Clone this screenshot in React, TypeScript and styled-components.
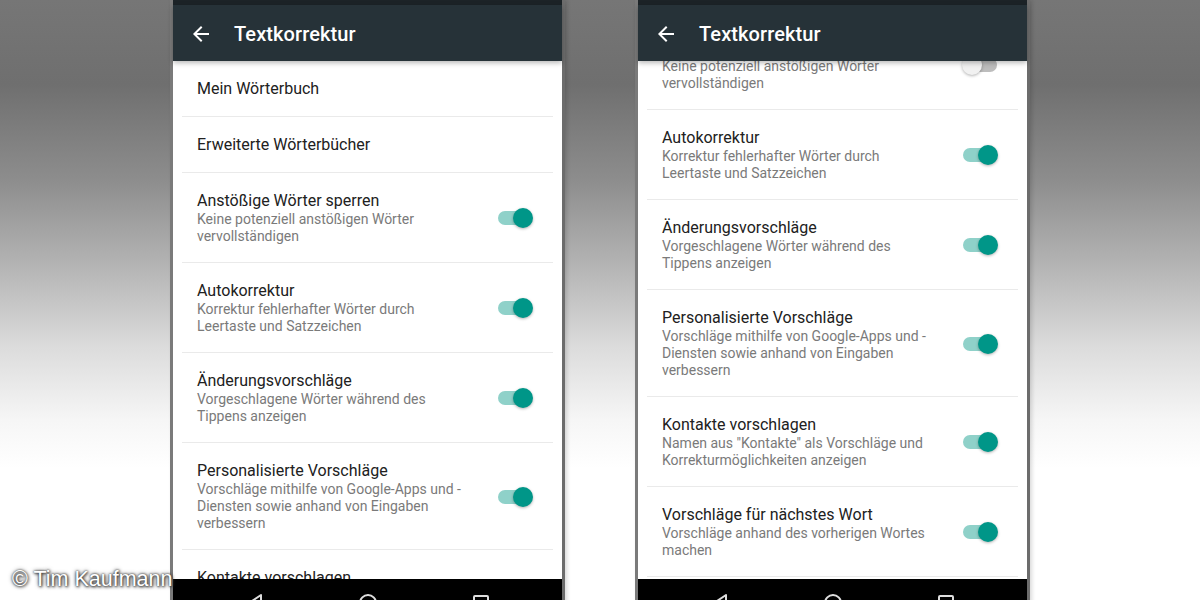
import React from "react";
import styled, { createGlobalStyle } from "styled-components";

type Row = {
  id: string;
  title: string;
  sub?: string[];
};

const rows: Row[] = [
  { id: "dict", title: "Mein Wörterbuch" },
  { id: "ext", title: "Erweiterte Wörterbücher" },
  {
    id: "block",
    title: "Anstößige Wörter sperren",
    sub: ["Keine potenziell anstößigen Wörter", "vervollständigen"],
  },
  {
    id: "auto",
    title: "Autokorrektur",
    sub: ["Korrektur fehlerhafter Wörter durch", "Leertaste und Satzzeichen"],
  },
  {
    id: "hints",
    title: "Änderungsvorschläge",
    sub: ["Vorgeschlagene Wörter während des", "Tippens anzeigen"],
  },
  {
    id: "personal",
    title: "Personalisierte Vorschläge",
    sub: [
      "Vorschläge mithilfe von Google-Apps und -",
      "Diensten sowie anhand von Eingaben",
      "verbessern",
    ],
  },
  {
    id: "contacts",
    title: "Kontakte vorschlagen",
    sub: ['Namen aus "Kontakte" als Vorschläge und', "Korrekturmöglichkeiten anzeigen"],
  },
  {
    id: "next",
    title: "Vorschläge für nächstes Wort",
    sub: ["Vorschläge anhand des vorherigen Wortes", "machen"],
  },
];

const GlobalStyle = createGlobalStyle`
  html, body {
    margin: 0;
    padding: 0;
  }
  body {
    font-family: Roboto, "Noto Sans", sans-serif;
    background: linear-gradient(
      180deg,
      #767676 0%,
      #6f6f6f 14%,
      #8d8d8d 30%,
      #b6b6b6 45%,
      #dcdcdc 58%,
      #f6f6f6 70%,
      #ffffff 78%
    );
  }
`;

const Stage = styled.div`
  position: relative;
  height: 600px;
  overflow: hidden;
  display: flex;
  justify-content: center;
  gap: 70px;
`;

const Phone = styled.div`
  width: 389px;
  height: 627px;
  flex: none;
  display: flex;
  flex-direction: column;
  background: #fff;
  border-left: 3px solid #7a7a7a;
  border-right: 3px solid #6c6c6c;
  box-shadow: 2px 0 4px rgba(0, 0, 0, 0.15);
`;

const StatusBar = styled.div`
  height: 5px;
  background: #1c2327;
`;

const Toolbar = styled.div`
  position: relative;
  z-index: 2;
  height: 56px;
  box-sizing: border-box;
  display: flex;
  align-items: center;
  padding: 2px 0 0 16px;
  background: #263238;
  box-shadow: 0 2px 5px rgba(0, 0, 0, 0.28);
`;

const Title = styled.h1`
  margin: 0 0 0 21px;
  color: #fff;
  font-size: 20px;
  font-weight: 500;
  letter-spacing: 0.1px;
`;

const Viewport = styled.div`
  flex: 1;
  overflow: hidden;
`;

const List = styled.div<{ $scroll: number }>`
  transform: translateY(${(p) => -p.$scroll}px);
`;

const Item = styled.div`
  display: flex;
  align-items: center;
  margin: 0 9px;
  padding: 18px 19px 17px 15px;
  border-bottom: 1px solid #eaeaea;
`;

const Texts = styled.div`
  flex: 1;
`;

const ItemTitle = styled.div`
  font-size: 16px;
  line-height: 20px;
  color: #212121;
`;

const ItemSub = styled.div`
  font-size: 14px;
  line-height: 17px;
  color: #7a7a7a;

  &:first-of-type {
    margin-top: 1px;
  }
`;

const Switch = styled.div<{ $on: boolean }>`
  position: relative;
  width: 37px;
  height: 20px;
  flex: none;

  &::before {
    content: "";
    position: absolute;
    left: 1px;
    right: 2px;
    top: 3px;
    height: 14px;
    border-radius: 7px;
    background: ${(p) => (p.$on ? "#8fd1c9" : "#bdbdbd")};
  }

  &::after {
    content: "";
    position: absolute;
    top: 0;
    left: ${(p) => (p.$on ? "16px" : "0")};
    width: 20px;
    height: 20px;
    border-radius: 50%;
    background: ${(p) => (p.$on ? "#009688" : "#f1f1f1")};
    box-shadow: 0 1px 3px rgba(0, 0, 0, 0.3);
  }
`;

const NavBar = styled.div`
  height: 48px;
  flex: none;
  background: #000;
  display: flex;
  align-items: center;
  justify-content: center;
  gap: 93px;
`;

const Watermark = styled.div`
  position: absolute;
  left: 12px;
  bottom: 9px;
  font-family: "Liberation Sans", Arial, sans-serif;
  font-size: 21.5px;
  line-height: 24px;
  color: #fff;
  text-shadow: 0 0 2px #333, 0 0 4px #555, 1px 1px 3px #333;
`;

const BackArrow = () => (
  <svg width="24" height="24" viewBox="0 0 24 24" fill="#fff">
    <path d="M20 11H7.83l5.59-5.59L12 4l-8 8 8 8 1.41-1.41L7.83 13H20v-2z" />
  </svg>
);

const NavIcons = () => (
  <>
    <svg width="20" height="20" viewBox="0 0 20 20" fill="none" stroke="#ddd" strokeWidth="2">
      <path d="M16 2L4 10l12 8z" strokeLinejoin="round" />
    </svg>
    <svg width="20" height="20" viewBox="0 0 20 20" fill="none" stroke="#ddd" strokeWidth="2">
      <circle cx="10" cy="10" r="8" />
    </svg>
    <svg width="20" height="20" viewBox="0 0 20 20" fill="none" stroke="#ddd" strokeWidth="2">
      <rect x="3" y="3" width="14" height="14" rx="1" />
    </svg>
  </>
);

type ScreenProps = {
  scroll: number;
  offIds: string[];
};

function Screen({ scroll, offIds }: ScreenProps) {
  return (
    <Phone>
      <StatusBar />
      <Toolbar>
        <BackArrow />
        <Title>Textkorrektur</Title>
      </Toolbar>
      <Viewport>
        <List $scroll={scroll}>
          {rows.map((r) => (
            <Item key={r.id}>
              <Texts>
                <ItemTitle>{r.title}</ItemTitle>
                {r.sub?.map((line) => (
                  <ItemSub key={line}>{line}</ItemSub>
                ))}
              </Texts>
              {r.sub && <Switch $on={!offIds.includes(r.id)} />}
            </Item>
          ))}
        </List>
      </Viewport>
      <NavBar>
        <NavIcons />
      </NavBar>
    </Phone>
  );
}

export default function App() {
  return (
    <>
      <GlobalStyle />
      <Stage>
        <Screen scroll={0} offIds={[]} />
        <Screen scroll={153} offIds={["block"]} />
        <Watermark>© Tim Kaufmann</Watermark>
      </Stage>
    </>
  );
}
